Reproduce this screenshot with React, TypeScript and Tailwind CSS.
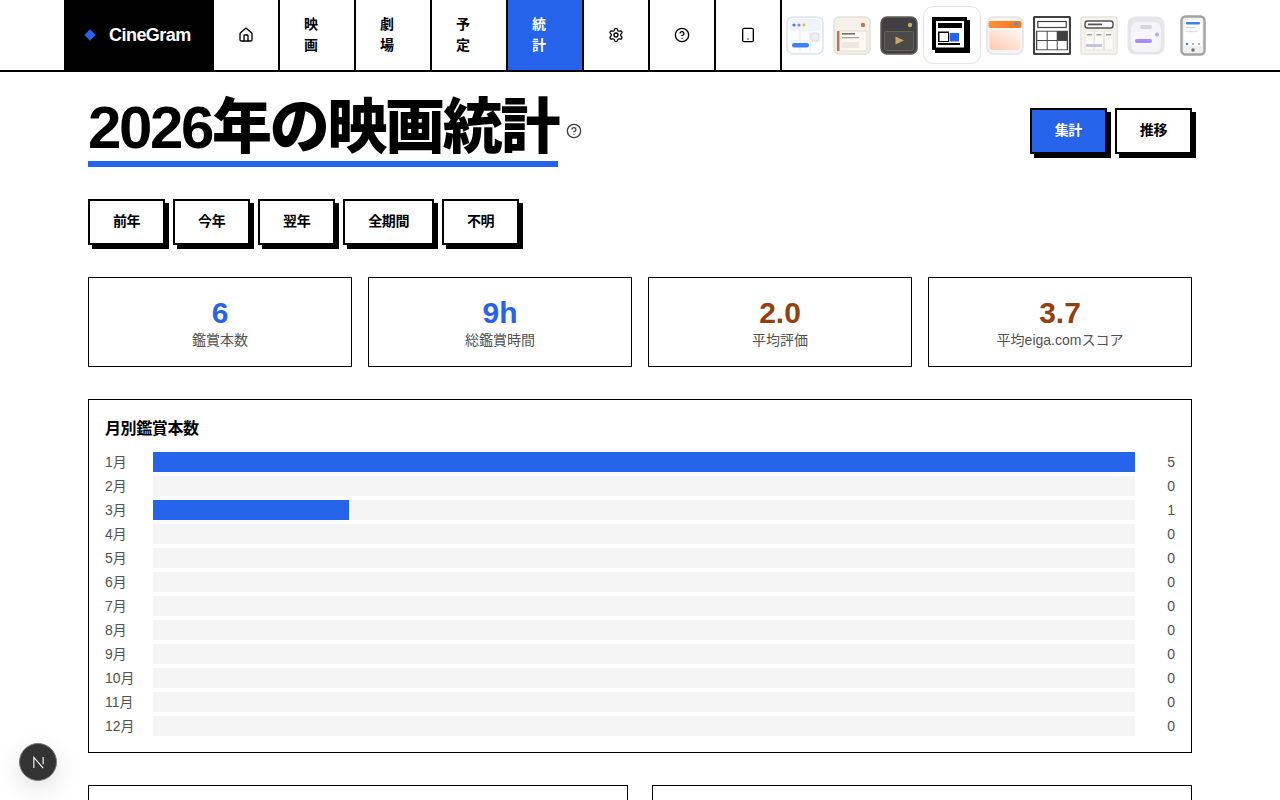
import { House, Settings, CircleHelp, Tablet } from "lucide-react";

function T1() {
  return (
    <svg width="38" height="39" viewBox="0 0 38 39">
      <rect x="1" y="1" width="36" height="37" rx="6" fill="#fbfcfe" stroke="#dfe3ea" strokeWidth="1.5" />
      <path d="M3 7a4 4 0 0 1 4-4h24a4 4 0 0 1 4 4v6H3z" fill="#eff3fe" />
      <circle cx="8" cy="9" r="1.6" fill="#3b82f6" /><circle cx="13" cy="9" r="1.6" fill="#8b7cf6" /><circle cx="18" cy="9" r="1.6" fill="#fbbf24" />
      <path d="M4 14H34M14 14V35M24 14V35M4 25H34" stroke="#e8ebf0" strokeWidth="1" />
      <rect x="25" y="17" width="8" height="8" rx="2" fill="#eeeff2" stroke="#d8dbe0" />
      <rect x="6" y="27" width="17" height="4.5" rx="2.2" fill="#3b82f6" />
    </svg>
  );
}
function T2() {
  return (
    <svg width="38" height="39" viewBox="0 0 38 39">
      <rect x="1" y="1" width="36" height="37" rx="5" fill="#f5f0e8" stroke="#e6e0d4" strokeWidth="1.5" />
      <circle cx="30" cy="9" r="2.2" fill="#c9705c" />
      <rect x="4" y="15" width="30" height="20" rx="1.5" fill="#fbf8f2" stroke="#e2dbcd" />
      <rect x="4" y="15" width="2.5" height="20" fill="#c9705c" />
      <rect x="9" y="17" width="13" height="1.6" fill="#777068" />
      <rect x="9" y="21" width="17" height="1.3" fill="#a8a195" />
      <rect x="9" y="26" width="17" height="6" rx="1" fill="#eee8dc" />
    </svg>
  );
}
function T3() {
  return (
    <svg width="38" height="39" viewBox="0 0 38 39">
      <rect x="1" y="1" width="36" height="37" rx="6" fill="#404044" stroke="#5f5c52" strokeWidth="1.5" />
      <circle cx="30" cy="9" r="2.2" fill="#c9a961" />
      <rect x="4.5" y="15.5" width="29" height="19" rx="1.5" fill="#4b4a48" stroke="#66624f" />
      <path d="M15.5 20.5V28.5L24 24.5z" fill="#c9a961" />
    </svg>
  );
}
function T4() {
  return (
    <svg width="38" height="37" viewBox="0 0 38 37">
      <rect x="0" y="0" width="35" height="33" fill="#000" />
      <rect x="3" y="3" width="35" height="33" fill="#000" />
      <rect x="4" y="4" width="28" height="26.5" fill="#fff" />
      <rect x="6" y="6" width="24" height="5" fill="#000" />
      <rect x="6" y="14.5" width="11" height="10.5" fill="#000" />
      <rect x="7.5" y="16" width="8.5" height="8" fill="#fff" />
      <rect x="17.6" y="16" width="9.4" height="8.5" fill="#2563eb" />
      <rect x="6" y="26" width="22" height="2" fill="#000" />
    </svg>
  );
}
function T5() {
  return (
    <svg width="38" height="39" viewBox="0 0 38 39">
      <defs>
        <linearGradient id="o5" x1="0" y1="0" x2="1" y2="0"><stop offset="0" stopColor="#fb923c" /><stop offset="1" stopColor="#f97316" /></linearGradient>
        <linearGradient id="p5" x1="0" y1="1" x2="1" y2="0"><stop offset="0" stopColor="#fdc9ae" /><stop offset="1" stopColor="#fff8f4" /></linearGradient>
      </defs>
      <rect x="1" y="1" width="36" height="37" rx="7" fill="#f6f6f6" stroke="#e4e4e7" strokeWidth="1.5" />
      <rect x="2.5" y="5" width="33" height="7" rx="2" fill="url(#o5)" />
      <circle cx="30" cy="8" r="2" fill="#5b8def" />
      <rect x="3.5" y="14" width="31" height="20" rx="3" fill="url(#p5)" />
    </svg>
  );
}
function T6() {
  return (
    <svg width="38" height="39" viewBox="0 0 38 39">
      <rect x="1" y="1" width="36" height="37" rx="1" fill="#fff" stroke="#404040" strokeWidth="2.2" />
      <rect x="4.8" y="5.5" width="28.4" height="6" fill="#fff" stroke="#404040" strokeWidth="1.2" />
      <rect x="3" y="14.5" width="32" height="20" fill="#4a4a4a" />
      <g fill="#fff">
        <rect x="4.3" y="15.7" width="9.4" height="8.3" /><rect x="14.7" y="15.7" width="9" height="8.3" />
        <rect x="24.7" y="15.7" width="9" height="8.3" fill="#404040" />
        <rect x="4.3" y="25" width="9.4" height="8.3" /><rect x="14.7" y="25" width="9" height="8.3" /><rect x="24.7" y="25" width="9" height="8.3" />
      </g>
      <rect x="3" y="12.5" width="32" height="2" fill="#fff" />
      <rect x="3" y="34.5" width="32" height="1.5" fill="#fff" />
    </svg>
  );
}
function T7() {
  return (
    <svg width="38" height="39" viewBox="0 0 38 39">
      <rect x="1" y="1" width="36" height="37" rx="2" fill="#f6f4ee" stroke="#e6e3da" strokeWidth="1.5" />
      <rect x="5" y="5" width="28" height="7" rx="2.5" fill="#fff" stroke="#555" strokeWidth="1.4" />
      <rect x="8" y="7.5" width="14" height="1.8" fill="#555" />
      <g fill="#fbfaf6" stroke="#e4e1d8" strokeWidth="0.8">
        <rect x="5" y="15" width="9" height="19" /><rect x="14.5" y="15" width="9" height="19" /><rect x="24.5" y="15" width="9" height="19" />
      </g>
      <rect x="7" y="18" width="5" height="1.5" fill="#a3a3a3" /><rect x="16.5" y="18" width="5" height="1.5" fill="#a3a3a3" /><rect x="26" y="18" width="5" height="1.5" fill="#a3a3a3" />
      <rect x="6" y="28" width="16" height="3" fill="#c4c0e8" />
    </svg>
  );
}
function T8() {
  return (
    <svg width="38" height="39" viewBox="0 0 38 39">
      <rect x="0.5" y="0.5" width="37" height="38" rx="8" fill="#e6e6e8" />
      <rect x="4" y="6" width="30" height="30" rx="7" fill="#f5f5f8" />
      <rect x="13" y="9" width="12" height="4" rx="2" fill="#d6d6da" />
      <rect x="6" y="16" width="26" height="14" rx="4" fill="#f7f5fd" />
      <rect x="8" y="23" width="17" height="4" rx="2" fill="#a78bfa" />
      <circle cx="30" cy="18.5" r="2" fill="#b9a4f6" />
    </svg>
  );
}
function T9() {
  return (
    <svg width="26" height="41" viewBox="0 0 26 41">
      <rect x="1.5" y="1.5" width="23" height="38" rx="4" fill="#f0f0f0" stroke="#a3a3a3" strokeWidth="2.4" />
      <rect x="4" y="5" width="18" height="26" fill="#fff" />
      <rect x="6" y="7" width="14" height="2.5" rx="1" fill="#3b82f6" />
      <rect x="6" y="12" width="10" height="1.2" fill="#d4d4d8" /><rect x="6" y="16" width="12" height="1.2" fill="#e0e0e4" />
      <circle cx="7" cy="29" r="1.2" fill="#3b82f6" /><circle cx="13" cy="29" r="1.1" fill="#a3a3a3" /><circle cx="19" cy="29" r="1.1" fill="#a3a3a3" />
      <circle cx="13" cy="35" r="1.8" fill="#737373" />
    </svg>
  );
}

function NavText({ a, b, active }: { a: string; b: string; active?: boolean }) {
  return (
    <div className={`w-[76px] h-full border-r-2 border-black pl-6 flex items-center text-sm font-bold ${active ? "bg-[#2563eb] text-white" : "text-black"}`}>
      <div className="w-[14px] leading-[21px] break-all">{a}{b}</div>
    </div>
  );
}
function NavIcon({ children }: { children: React.ReactNode }) {
  return <div className="w-[66px] h-full border-r-2 border-black flex items-center justify-center text-black">{children}</div>;
}
function Btn({ label, active }: { label: string; active?: boolean }) {
  return (
    <button className={`h-[46px] px-[22.9px] pb-[1px] border-2 border-black shadow-[4px_4px_0_#000] text-[14px] tracking-tight font-bold ${active ? "bg-[#2563eb] text-white" : "bg-white text-black"}`}>
      {label}
    </button>
  );
}
function Stat({ v, l, c }: { v: string; l: string; c: string }) {
  return (
    <div className="h-[90px] border border-black flex flex-col items-center pt-[17px]">
      <div className={`text-3xl leading-9 font-bold ${c}`}>{v}</div>
      <div className="text-sm leading-5 text-[#525252] -mt-[1px]">{l}</div>
    </div>
  );
}

const months = [5, 0, 1, 0, 0, 0, 0, 0, 0, 0, 0, 0];

export default function App() {
  return (
    <div className="h-screen overflow-hidden bg-white font-['Liberation_Sans','Noto_Sans_CJK_JP',sans-serif]">
      <header className="h-[72px] border-b-2 border-black">
        <div className="max-w-6xl mx-auto h-full flex">
          <div className="w-[150px] h-full bg-black flex items-center pl-[20px] gap-[15px]">
            <div className="w-[8px] h-[8px] rotate-45 bg-[#2563eb] ml-[2px]" />
            <span className="text-white font-bold text-[18px] tracking-[-0.03em]">CineGram</span>
          </div>
          <NavIcon><House size={16} /></NavIcon>
          <NavText a="映" b="画" />
          <NavText a="劇" b="場" />
          <NavText a="予" b="定" />
          <NavText a="統" b="計" active />
          <NavIcon><Settings size={16} /></NavIcon>
          <NavIcon><CircleHelp size={16} /></NavIcon>
          <NavIcon><Tablet size={16} /></NavIcon>
          <div className="flex items-center pl-1 gap-[9px] h-full">
            <T1 /><T2 /><T3 />
            <div className="-mx-1 w-[58px] h-[58px] rounded-[10px] border border-[#e5e5e5] bg-white flex items-center justify-center">
              <div className="mr-[3px]"><T4 /></div>
            </div>
            <T5 /><T6 /><T7 /><T8 />
            <div className="w-[38px] flex justify-center"><T9 /></div>
          </div>
        </div>
      </header>

      <main className="max-w-6xl mx-auto px-6">
        <div className="h-[95px] flex items-start justify-between">
          <div className="flex items-center mt-[23px]">
            <h1 className="text-[60px] leading-[66px] font-black tracking-[-0.039em] text-black border-b-[6px] border-[#2563eb] whitespace-nowrap">2026年の映画統計</h1>
            <CircleHelp size={16} className="ml-2 text-[#404040]" />
          </div>
          <div className="flex gap-2 mt-[36px]">
            <Btn label="集計" active />
            <Btn label="推移" />
          </div>
        </div>

        <div className="flex gap-2 mt-[32px]">
          <Btn label="前年" /><Btn label="今年" /><Btn label="翌年" /><Btn label="全期間" /><Btn label="不明" />
        </div>

        <div className="grid grid-cols-4 gap-4 mt-[32px]">
          <Stat v="6" l="鑑賞本数" c="text-[#2563eb]" />
          <Stat v="9h" l="総鑑賞時間" c="text-[#2563eb]" />
          <Stat v="2.0" l="平均評価" c="text-[#92400e]" />
          <Stat v="3.7" l="平均eiga.comスコア" c="text-[#92400e]" />
        </div>

        <section className="mt-8 h-[354px] border border-black px-4 pt-[17px]">
          <h2 className="text-base leading-6 font-bold tracking-tight text-black mb-[11px]">月別鑑賞本数</h2>
          <div className="flex flex-col gap-1">
            {months.map((n, i) => (
              <div key={i} className="flex items-center h-5 text-sm text-[#525252]">
                <div className="w-12">{i + 1}月</div>
                <div className="flex-1 h-5 bg-[#f5f5f5]">
                  <div className="h-full bg-[#2563eb]" style={{ width: `${(n / 5) * 100}%` }} />
                </div>
                <div className="w-10 text-right">{n}</div>
              </div>
            ))}
          </div>
        </section>

        <div className="grid grid-cols-2 gap-6 mt-8">
          <div className="h-[300px] border border-black" />
          <div className="h-[300px] border border-black" />
        </div>
      </main>

      <div className="fixed left-[19px] top-[743px] w-[38px] h-[38px] rounded-full bg-[#333] border border-[#777] shadow-[0_8px_24px_rgba(0,0,0,0.12)] flex items-center justify-center">
        <svg width="13" height="13" viewBox="0 0 14 14" fill="none" stroke="#fff" strokeWidth="1.2">
          <path d="M2 13V1.5L12 13" /><path d="M12 1V9" />
        </svg>
      </div>
    </div>
  );
}
